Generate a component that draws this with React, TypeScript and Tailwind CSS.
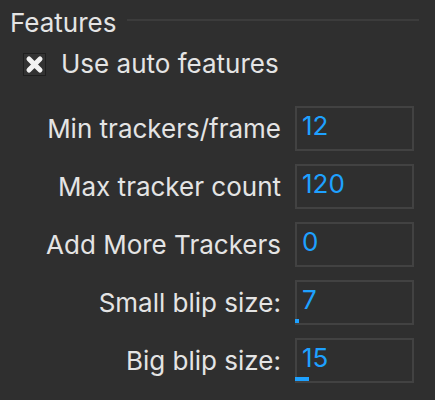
import React from "react";

const fields = [
  { label: "Min trackers/frame", value: "12", bar: 0 },
  { label: "Max tracker count", value: "120", bar: 0 },
  { label: "Add More Trackers", value: "0", bar: 0 },
  { label: "Small blip size:", value: "7", bar: 4 },
  { label: "Big blip size:", value: "15", bar: 14 },
];

export default function App() {
  return (
    <div
      className="w-[435px] h-[400px] overflow-hidden bg-[#2f2f2f] text-[#e4e4e4] text-[26px] leading-none"
      style={{ fontFamily: "Inter, 'Noto Sans', sans-serif" }}
    >
      {/* Section header */}
      <div className="flex items-center pl-[10px] pr-[16px] pt-[10px]">
        <span>Features</span>
        <div className="flex-1 h-[2px] bg-[#3c3c3c] ml-[11px] mt-[-6px]" />
      </div>

      {/* Checkbox */}
      <div className="flex items-center pl-[23px] mt-[15px]">
        <div className="w-[23px] h-[23px] border border-[#1f1f1f] bg-[#333333] flex items-center justify-center">
          <svg width="19" height="19" viewBox="0 0 19 19">
            <path d="M4 4 L15 15 M15 4 L4 15" stroke="#f2f2f2" strokeWidth="5" strokeLinecap="round" />
          </svg>
        </div>
        <span className="ml-[15px]">Use auto features</span>
      </div>

      {/* Numeric fields */}
      <div className="flex flex-col gap-[13px] mt-[29px]">
        {fields.map((f) => (
          <div key={f.label} className="flex items-center">
            <div className="w-[281px] text-right pt-[1px]">{f.label}</div>
            <div className="relative ml-[14px] w-[119px] h-[45px] border-2 border-[#424242] pl-[5px] pb-[5px] flex items-center text-[#1ea1ff]">
              {f.value}
              {f.bar > 0 && (
                <div
                  className="absolute left-[-2px] bottom-0 h-[4px] bg-[#1ea1ff]"
                  style={{ width: f.bar }}
                />
              )}
            </div>
          </div>
        ))}
      </div>
    </div>
  );
}
